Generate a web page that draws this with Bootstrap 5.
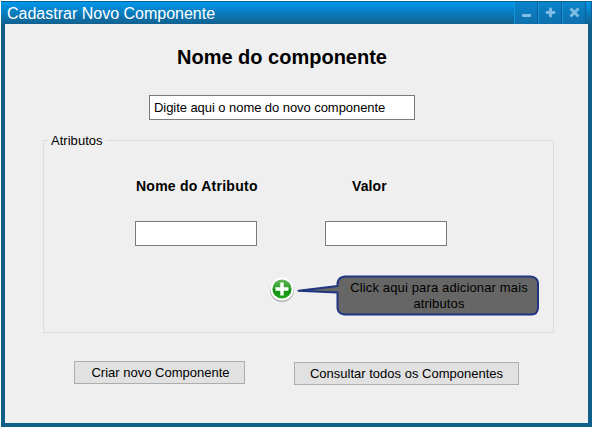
<!DOCTYPE html>
<html lang="pt-BR">
<head>
<meta charset="utf-8">
<title>Cadastrar Novo Componente</title>
<link href="https://cdn.jsdelivr.net/npm/bootstrap@5.3.0/dist/css/bootstrap.min.css" rel="stylesheet">
<style>
body{font:13px/16px "Liberation Sans",Arial,sans-serif;color:#000;background:#fff;overflow:hidden}
.app-window{width:591px;height:426px;margin:1px 0 0 1px;background:#105f8b;padding:0 4px 4px}
.titlebar{height:23px;margin:0 -4px;padding-left:6px;background:linear-gradient(#0098ec,#12618f);border:1px solid #0d608f;border-bottom:0;border-left:0}
.titlebar h1{font-size:16px;line-height:23px;font-weight:400;color:#fff}
.win-btn{width:24px;height:22px;border:0;border-left:1px solid #1295dd;border-right:1px solid #0b5f96;background:linear-gradient(#0a85cc,#0f6fac)}
.win-btn svg{display:block}
.win-controls{margin-right:5px}
.content-area{height:399px;background:#efefef}
.main-title{font-size:20px;line-height:24px;font-weight:700;padding:21px 29px 0 0}
.field{height:25px;border:1px solid #7a7a7a;border-radius:0;background:#fff;color:#000;font-size:13px;line-height:16px;padding:0 4px}
.field:focus{box-shadow:none;color:#000}
.name-field{width:266px;margin:26px 0 0 144px;letter-spacing:-.06px}
.attributes{width:511px;height:201px;margin:12px 0 0 38px;border:1px solid #dcdcdc}
.attributes legend{float:none;width:max-content;font-size:13px;line-height:16px;margin:0 0 0 4px;padding:1px 3px 0;height:16px;letter-spacing:.03px}
.attr-grid{display:grid;grid-template-columns:122px 122px;column-gap:68px;margin:28px 0 0 91px}
.attr-grid label{font-size:14px;line-height:20px;font-weight:700;white-space:nowrap;letter-spacing:.25px;margin-left:1px}
.attr-grid .value-label{margin-left:27px;letter-spacing:.1px}
.attr-grid .field{margin-top:25px}
.add-row{margin:29px 0 0 225px}
.add-btn{width:26px;height:28px}
.tip{position:relative;width:244px;height:42px;margin-left:2px}
.tip svg{position:absolute;left:0;top:0}
.tip p{position:relative;margin:0 0 0 42px;width:200px;padding-top:5px;letter-spacing:.14px}
.actions{padding:28px 0 0 69px;gap:49px}
.action-btn{height:23px;background:#e1e1e1;border:1px solid #adadad;border-radius:0;padding:0;font-size:13px;line-height:20px;color:#000}
.create-btn{width:171px;padding-left:2px}
.list-btn{width:225px;margin-top:1px;letter-spacing:.01px}
</style>
<script src="https://cdn.jsdelivr.net/npm/bootstrap@5.3.0/dist/js/bootstrap.bundle.min.js"></script>
</head>
<body>
<div class="app-window">
  <header class="titlebar d-flex justify-content-between">
    <h1 class="m-0">Cadastrar Novo Componente</h1>
    <div class="win-controls d-flex">
      <button class="win-btn p-0" aria-label="Minimizar"><svg width="22" height="22"><rect x="7" y="12" width="9" height="3" rx="1" fill="#80bfe4"/></svg></button>
      <button class="win-btn p-0" aria-label="Maximizar"><svg width="22" height="22"><path d="M11.5 7v7M8 10.500h7" stroke="#80bfe4" stroke-width="2.900" stroke-linecap="round"/></svg></button>
      <button class="win-btn p-0" aria-label="Fechar"><svg width="22" height="22"><path d="M8.500 7.500l6 6M14.500 7.500l-6 6" stroke="#80bfe4" stroke-width="2.800" stroke-linecap="square"/></svg></button>
    </div>
  </header>
  <main class="content-area">
    <h2 class="main-title text-center m-0">Nome do componente</h2>
    <input class="form-control field name-field" value="Digite aqui o nome do novo componente" aria-label="Nome do componente">
    <fieldset class="attributes">
      <legend>Atributos</legend>
      <div class="attr-grid">
        <label for="attr">Nome do Atributo</label>
        <label for="val" class="value-label">Valor</label>
        <input id="attr" class="form-control field">
        <input id="val" class="form-control field">
      </div>
      <div class="add-row d-flex">
        <button class="add-btn border-0 bg-transparent p-0" aria-label="Adicionar atributo">
          <svg class="d-block" width="26" height="28"><circle cx="13" cy="15.2" r="12" fill="#000" opacity=".12"/><circle cx="13" cy="14.8" r="11.8" fill="#000" opacity=".22"/><circle cx="13" cy="14" r="11.6" fill="#fff"/><defs><linearGradient id="green" x2="0" y2="1"><stop stop-color="#5fb455"/><stop offset=".48" stop-color="#2da22a"/><stop offset=".52" stop-color="#109010"/><stop offset="1" stop-color="#20a51b"/></linearGradient></defs><circle cx="13" cy="14" r="9.6" fill="url(#green)"/><path d="M13 7.5v13M6.5 14h13" stroke="#fff" stroke-width="3.4"/></svg>
        </button>
        <div class="tip text-center">
          <svg width="244" height="42"><path d="M1.5 15.8L40.5 11V8Q41.5 2 48 1.5H233.500Q240.500 2 241 8V33Q240.500 39.500 234.500 39.500H47.500Q41 39 40.500 33V17.500Z" fill="#666" stroke="#1f3580" stroke-width="2" stroke-linejoin="round"/></svg>
          <p>Click aqui para adicionar mais<br>atributos</p>
        </div>
      </div>
    </fieldset>
    <div class="actions d-flex">
      <button class="btn action-btn create-btn">Criar novo Componente</button>
      <button class="btn action-btn list-btn">Consultar todos os Componentes</button>
    </div>
  </main>
</div>
</body>
</html>
